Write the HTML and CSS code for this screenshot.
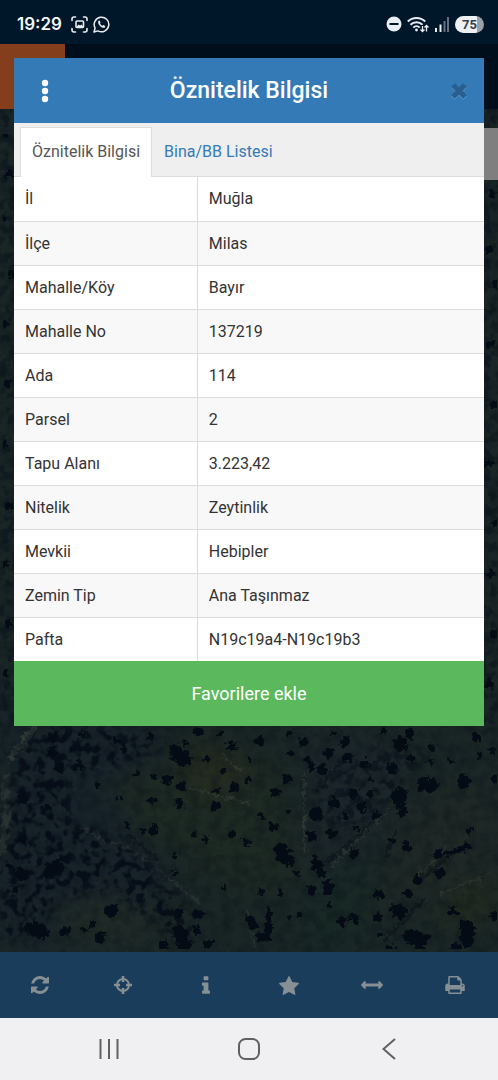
FILE: index.html
```
<!DOCTYPE html>
<html lang="tr">
<head>
  <meta charset="UTF-8" />
  <meta name="viewport" content="width=device-width, initial-scale=1.0"/>
  <title>Öznitelik Bilgisi</title>
  <link rel="stylesheet" href="styles.css">
</head>
<body>

<header class="status-bar">
  <div class="status-left">
    <span class="clock">19:29</span>
    <svg width="17" height="17" viewBox="0 0 17 17" fill="none" stroke="#e8eef4" stroke-width="1.6" stroke-linecap="round">
      <path d="M1 4.500V3a2 2 0 0 1 2-2h1.500M12.500 1H14a2 2 0 0 1 2 2v1.500M16 12.500V14a2 2 0 0 1-2 2h-1.500M4.500 16H3a2 2 0 0 1-2-2v-1.500"/>
      <rect x="5" y="5" width="7.500" height="6.500" rx="1"/>
      <path d="M5.500 11l2-2.500 1.500 1 1.500-1 1.500 2v1h-6z" fill="#e8eef4" stroke="none"/>
    </svg>
    <svg width="17" height="17" viewBox="0 0 17 17" fill="none" stroke="#e8eef4" stroke-width="1.500">
      <path d="M1 16l1.100-4A7.300 7.300 0 1 1 5 14.900z" stroke-linejoin="round"/>
      <path d="M5.200 5.300c.3-.8 1.300-1 1.600-.4l.7 1.500c.1.400-.5.900-.6 1.200.5 1 1.400 1.800 2.400 2.300.4-.1.800-.9 1.200-.8l1.500.8c.5.300.200 1.400-.6 1.800-2.500 1.100-7-3.400-6.200-6.400z" fill="#e8eef4" stroke="none"/>
    </svg>
  </div>
  <div class="status-right">
    <svg width="16" height="16" viewBox="0 0 16 16">
      <circle cx="8" cy="8" r="7.500" fill="#e8eef4"/>
      <path d="M3.500 8h9" stroke="#001629" stroke-width="2"/>
    </svg>
    <svg width="22" height="17" viewBox="0 0 22 17" fill="none" stroke="#e8eef4" stroke-width="2">
      <path d="M.8 5.500a12.500 12.500 0 0 1 17.400 0M3.500 8.700a8.600 8.600 0 0 1 12 0M6.300 11.600a4.600 4.600 0 0 1 6.400 0"/>
      <circle cx="9.500" cy="14" r="1.400" fill="#e8eef4" stroke="none"/>
      <path d="M15.500 9v7M13.500 13.700l2 2.300 2-2.300M19.500 16V9M17.500 11.300l2-2.300 2 2.300" stroke="#001629" stroke-width="3"/>
      <path d="M15.500 10v5.500M13.500 13.500l2 2 2-2M19.500 15.500v-6M17.500 11.500l2-2 2 2" stroke-width="1.300"/>
    </svg>
    <svg width="16" height="16" viewBox="0 0 16 16">
      <path d="M1 12h2v4H1zM5.500 8.500h2V16h-2z" fill="#e8eef4"/>
      <path d="M9.500 5h2v11h-2zM13 1h2v15h-2z" fill="#63717e"/>
    </svg>
    <span class="battery">75</span>
  </div>
</header>

<main class="app">
  <svg class="map" viewBox="0 0 498 908" preserveAspectRatio="xMidYMax slice" aria-hidden="true">
    <defs>
      <filter id="rough" x="0" y="0" width="100%" height="100%" color-interpolation-filters="sRGB">
        <feTurbulence type="fractalNoise" baseFrequency=".22" numOctaves="2" seed="4" result="n"/>
        <feDisplacementMap in="SourceGraphic" in2="n" scale="10" xChannelSelector="R" yChannelSelector="G"/>
        <feGaussianBlur stdDeviation=".7"/>
      </filter>
      <filter id="soft" x="-20%" y="-20%" width="140%" height="140%" color-interpolation-filters="sRGB">
        <feGaussianBlur stdDeviation="14"/>
      </filter>
      <filter id="grain" x="0" y="0" width="100%" height="100%" color-interpolation-filters="sRGB">
        <feTurbulence type="fractalNoise" baseFrequency=".09" numOctaves="4" seed="9"/>
        <feColorMatrix values="0 0 0 0 .02  0 0 0 0 .05  0 0 0 0 .08  0 2.400 0 0 -.95"/>
      </filter>
      <filter id="canopy" x="0" y="0" width="100%" height="100%" color-interpolation-filters="sRGB">
        <feTurbulence type="fractalNoise" baseFrequency=".11" numOctaves="2" seed="21" result="n"/>
        <feColorMatrix in="n" values="0 0 0 0 .02  0 0 0 0 .045  0 0 0 0 .09  0 6 0 0 -2.800" result="dots"/>
        <feGaussianBlur in="SourceAlpha" stdDeviation="6" result="area"/>
        <feComposite in="dots" in2="area" operator="in"/>
      </filter>
    </defs>

    <rect width="498" height="908" fill="#1a2626"/>

    <!-- ground tones -->
    <g filter="url(#soft)">
      <path d="M0 640h130l70 110-60 158H0z" fill="#182329"/>
      <path d="M110 740l90-45 80 20 30 120-60 20-110-60z" fill="#1d2923"/>
      <path d="M180 710l50-5 20 30-50 20z" fill="#262b1f"/>
      <path d="M400 760l98-30v90l-120 60z" fill="#1f2826"/>
      <path d="M450 850l48-20v40l-60 20z" fill="#242c1f"/>
      <path d="M300 690l110 10-30 90-70 60z" fill="#1c262a"/>
      <path d="M320 830l60-10-20 80-60 8z" fill="#182925"/>
      <path d="M60 860l70-10 40 50H60z" fill="#202b27"/>
    </g>

    <!-- tracks -->
    <g fill="none" stroke="#42463f" filter="url(#rough)">
      <path d="M36 682L8 716" stroke-width="6" opacity=".6"/>
      <path d="M6 730v60L0 810" stroke-width="7" opacity=".4"/>
      <path d="M190 744l60 16M304 728v80M222 710l20 18" stroke-width="2" opacity=".5"/>
      <path d="M70 780l70 30 60 50M246 866l10 40M410 840l40-40M330 824l60-60M440 850l50-20" stroke-width="2" opacity=".4"/>
    </g>

    <!-- thick woodland -->
    <g filter="url(#canopy)" opacity=".85">
      <path d="M20 700l30-20 60 5 60 15-40 20-50 10-10 45 55 20 50 50 25 60-40-20-50-40-50 10-25 40H0V780l15-60z"/>
    </g>
    <g filter="url(#canopy)" opacity=".5">
      <path d="M0 0h16v690H0zM482 0h16v690h-16z"/>
      <path d="M380 700l50 10-40 50-60 40-20-60z"/>
    </g>

    <rect width="498" height="908" filter="url(#grain)" opacity=".3"/>

    <!-- trees -->
    <g class="trees" filter="url(#rough)">
      <path stroke-width="14" d="M176 708l8 8M111 867h0M23 830h0M316 770h0M282 811l5 4M281 806h0M400 868h0M410 893l12 2M399 751v6M425 741h6M464 738h0M467 882v14M32 884l10 4M180 888l4 12M400 700h0M50 828l8-6"/>
      <path stroke-width="10" d="M167 736h0M181 743h0M180 759h0M153 786h0M215 762h0M274 783h0M234 743h0M275 748h0M287 735h0M260 698h0M231 702h0M303 698h0M328 709h0M322 726h0M348 714h0M364 720h0M392 724h0M354 750h0M362 763h0M334 759h0M376 771h0M402 768h0M311 792h0M332 790h0M354 810h0M406 803h0M315 818l6 10M312 847h0M328 840v8M380 850h0M342 877h0M354 874h0M378 873h0M395 865h0M408 850h0M417 836h0M440 829h0M438 810h0M453 867h0M497 734h0M60 724h0M80 722h0M52 693h0M52 708h0M23 755h0M22 795h0M65 888h0M100 894h0M164 902h0M208 900h0M196 886h0M198 870h0M180 868h0M250 876l3 4M262 893h0M390 905h0M420 905h0M455 904h0M495 872h0M199 687h0M345 698h0M476 693h0M410 690h0"/>
      <path stroke-width="6" d="M207 716h0M223 727h0M250 716h0M248 736h0M217 747h0M152 756h0M127 781h0M143 786h0M206 795h0M194 790h0M288 767h0M262 772h0M232 790h0M244 796h0M247 800h0M261 848h0M281 848h0M223 844h0M174 829h0M175 812h0M291 709h0M289 689h0M308 714l4 10M370 736h0M370 750h0M345 772h0M356 785h0M391 796h0M469 787h0M430 719h0M411 714h0M451 718h0M480 711h0M431 703h0M297 829h0M300 871h0M290 873h0M330 862h0M444 810l10-2 14-6M10 822h0M15 846h0M92 880h0M84 886h0M185 700h0M150 692h0M115 696h0M124 706h0M82 690h0M98 742h0M136 730h0M154 733h0M120 755h0M48 764h0M220 690h0M334 690h0M384 688h0M492 706h0M269 865v30M380 890h0"/>
      <path stroke-width="4" d="M372 780l-20 18-20 16-16 10M130 792l26 22M318 744l26-30M386 812l10-24M420 836l24-20M384 896l40-40" opacity=".4"/>
      <path stroke-width="8" d="M4 90h0M9 130h0M3 175h0M11 230h0M5 280h0M8 340h0M3 400h0M10 462h0M5 520h0M9 580h0M4 630h0M492 150h0M489 205h0M496 240h0M490 300h0M495 360h0M489 420h0M496 480h0M491 530h0M494 590h0M489 640h0"/>
    </g>
  </svg>

  <div class="app-header"><span class="brand"></span></div>
  <div class="search-edge"></div>

  <section class="dialog" role="dialog" aria-labelledby="dialogTitle">
    <div class="dialog-header">
      <button class="icon-button menu" aria-label="Menü">
        <svg width="8" height="24" viewBox="0 0 8 24" fill="#fff"><circle cx="4" cy="4" r="3.200"/><circle cx="4" cy="12" r="3.200"/><circle cx="4" cy="20" r="3.200"/></svg>
      </button>
      <h1 id="dialogTitle">Öznitelik Bilgisi</h1>
      <button class="icon-button close" aria-label="Kapat">
        <svg width="18" height="18" viewBox="0 0 18 18" fill="none" stroke-width="5"><path d="M3 4l12 12M15 4L3 16" stroke="#5c97c9"/><path d="M3 3l12 12M15 3L3 15" stroke="#295f8f"/></svg>
      </button>
    </div>

    <nav class="tabs">
      <a href="#oznitelik" class="tab active">Öznitelik Bilgisi</a>
      <a href="#bina" class="tab">Bina/BB Listesi</a>
    </nav>

    <table class="attributes" id="oznitelik">
      <tbody>
        <tr><th scope="row">İl</th><td>Muğla</td></tr>
        <tr><th scope="row">İlçe</th><td>Milas</td></tr>
        <tr><th scope="row">Mahalle/Köy</th><td>Bayır</td></tr>
        <tr><th scope="row">Mahalle No</th><td>137219</td></tr>
        <tr><th scope="row">Ada</th><td>114</td></tr>
        <tr><th scope="row">Parsel</th><td>2</td></tr>
        <tr><th scope="row">Tapu Alanı</th><td>3.223,42</td></tr>
        <tr><th scope="row">Nitelik</th><td>Zeytinlik</td></tr>
        <tr><th scope="row">Mevkii</th><td>Hebipler</td></tr>
        <tr><th scope="row">Zemin Tip</th><td>Ana Taşınmaz</td></tr>
        <tr><th scope="row">Pafta</th><td>N19c19a4-N19c19b3</td></tr>
      </tbody>
    </table>

    <button class="favorite">Favorilere ekle</button>
  </section>
</main>

<nav class="toolbar">
  <button aria-label="Yenile">
    <svg width="18" height="18" viewBox="0 0 1536 1536"><path d="M1511 928q0 5-1 7-64 268-268 434.500T764 1536q-146 0-282.500-55T238 1324l-129 129q-19 19-45 19t-45-19-19-45V960q0-26 19-45t45-19h448q26 0 45 19t19 45-19 45l-137 137q71 66 161 102t187 36q134 0 250-65t186-179q11-17 53-117 8-23 30-23h192q13 0 22.500 9.500t9.500 22.500zm25-800v448q0 26-19 45t-45 19h-448q-26 0-45-19t-19-45 19-45l138-138Q969 256 768 256q-134 0-250 65T332 500q-11 17-53 117-8 23-30 23H50q-13 0-22.500-9.500T18 608v-7q65-268 270-434.500T768 0q146 0 284 55.500T1297 212l130-129q19-19 45-19t45 19 19 45z"/></svg>
  </button>
  <button aria-label="Konum">
    <svg width="18" height="18" viewBox="0 0 18 18"><path fill="none" stroke="#868f94" stroke-width="2" d="M9 3a6 6 0 1 0 0 12A6 6 0 0 0 9 3z"/><path d="M7.700 0h2.600v6H7.700zM7.700 12h2.600v6H7.700zM0 7.700h6v2.600H0zM12 7.700h6v2.600h-6z"/></svg>
  </button>
  <button aria-label="Bilgi">
    <svg width="8" height="18" viewBox="0 0 640 1408"><path d="M640 1216v128q0 26-19 45t-45 19H64q-26 0-45-19t-19-45v-128q0-26 19-45t45-19h64V768H64q-26 0-45-19T0 704V576q0-26 19-45t45-19h384q26 0 45 19t19 45v576h64q26 0 45 19t19 45zM512 64v192q0 26-19 45t-45 19H192q-26 0-45-19t-19-45V64q0-26 19-45t45-19h256q26 0 45 19t19 45z"/></svg>
  </button>
  <button aria-label="Favoriler">
    <svg width="20" height="19" viewBox="0 0 1664 1587"><path d="M1664 615q0 22-26 48l-363 354 86 500q1 7 1 20 0 21-10.500 35.500T1321 1587q-19 0-40-12l-449-236-449 236q-22 12-40 12-21 0-31.500-14.500T301 1537q0-6 2-20l86-500L25 663Q0 636 0 615q0-37 56-46l502-73L783 41q19-41 49-41t49 41l225 455 502 73q56 9 56 46z"/></svg>
  </button>
  <button aria-label="Ölç">
    <svg width="22" height="10" viewBox="0 0 1792 768"><path d="M1792 384q0 26-19 45l-256 256q-19 19-45 19t-45-19-19-45V512H384v128q0 26-19 45t-45 19-45-19L19 429Q0 410 0 384t19-45L275 83q19-19 45-19t45 19 19 45v128h1024V128q0-26 19-45t45-19 45 19l256 256q19 19 19 45z"/></svg>
  </button>
  <button aria-label="Yazdır">
    <svg width="20" height="18" viewBox="0 0 1664 1536"><path d="M384 1408h896v-256H384v256zm0-640h896V384h-160q-40 0-68-28t-28-68V128H384v640zm1152 64q0-26-19-45t-45-19-45 19-19 45 19 45 45 19 45-19 19-45zm128 0v416q0 13-9.500 22.500t-22.500 9.500h-224v160q0 40-28 68t-68 28H352q-40 0-68-28t-28-68v-160H32q-13 0-22.500-9.500T0 1248V832q0-79 56.500-135.500T192 640h64V96q0-40 28-68t68-28h672q40 0 88 20t76 48l152 152q28 28 48 76t20 88v256h64q79 0 135.500 56.500T1664 832z"/></svg>
  </button>
</nav>

<nav class="system-nav">
  <button aria-label="Son uygulamalar">
    <svg width="20" height="20" viewBox="0 0 20 20"><path d="M1.500 0v20M10 0v20M18.500 0v20"/></svg>
  </button>
  <button aria-label="Ana ekran">
    <svg width="22" height="22" viewBox="0 0 22 22"><rect x="1" y="1" width="20" height="20" rx="6.500"/></svg>
  </button>
  <button aria-label="Geri">
    <svg width="14" height="22" viewBox="0 0 14 22"><path d="M13 1L1.500 11 13 21"/></svg>
  </button>
</nav>

</body>
</html>
```
FILE: styles.css
```
* { box-sizing: border-box; }
body {
  margin: 0;
  min-height: 100vh;
  display: flex;
  flex-direction: column;
  background: #001629;
  color: #333;
  font-family: Roboto, "Noto Sans", sans-serif;
  font-size: 16px;
}
button {
  border: none;
  padding: 0;
  background: none;
  font-family: inherit;
  cursor: pointer;
}
svg { display: block; }

/* status bar */
.status-bar {
  display: flex;
  justify-content: space-between;
  align-items: center;
  height: 44px;
  padding: 4px 14px 0 17px;
  background: #001629;
}
.status-left,
.status-right {
  display: flex;
  align-items: center;
  gap: 5px;
}
.clock {
  margin-right: 4px;
  color: #f3f7fa;
  font-family: Inter, sans-serif;
  font-size: 17px;
  font-weight: 600;
}
.battery {
  width: 29px;
  border-radius: 9px;
  background: linear-gradient(90deg, #eef1f4 75%, #98a0a8 75%);
  color: #33404c;
  font-size: 13px;
  font-weight: 700;
  line-height: 17px;
  text-align: center;
}

/* map and what lies over it */
.app {
  position: relative;
  flex: 1;
  padding: 14px;
  overflow: hidden;
}
.map {
  position: absolute;
  top: 0;
  left: 0;
  width: 100%;
  height: 100%;
}
.trees {
  fill: none;
  stroke: #040b14;
  stroke-linecap: round;
}
.app-header {
  position: absolute;
  top: 0;
  left: 0;
  right: 0;
  height: 65px;
  background: #000e1b;
}
.brand {
  display: block;
  width: 65px;
  height: 100%;
  background: #843e1c;
}
.search-edge {
  position: absolute;
  top: 84px;
  right: 0;
  width: 40px;
  height: 52px;
  background: #7f7f7f;
}

/* dialog */
.dialog {
  position: relative;
  background: #fff;
}
.dialog-header {
  display: flex;
  align-items: center;
  justify-content: space-between;
  height: 65px;
  padding: 0 16px;
  background: #337ab7;
}
.dialog-header h1 {
  margin: 0;
  color: #fff;
  font-size: 23px;
  font-weight: 500;
}
.icon-button {
  display: flex;
  justify-content: center;
  width: 30px;
}
.icon-button.close { justify-content: flex-end; }
.tabs {
  display: flex;
  height: 54px;
  padding: 4px 6px 0;
  border-bottom: 1px solid #ddd;
  background: #efefef;
}
.tab {
  height: 50px;
  padding: 0 11px;
  border: 1px solid transparent;
  border-bottom: none;
  color: #337ab7;
  line-height: 48px;
  text-decoration: none;
}
.tab.active {
  border-color: #ddd;
  background: #fff;
  color: #555;
}
.attributes {
  width: 100%;
  border-collapse: collapse;
  table-layout: fixed;
}
.attributes th,
.attributes td {
  height: 44px;
  padding: 0 11px;
  border-top: 1px solid #ddd;
  font-weight: 400;
  text-align: left;
}
.attributes tr:first-child th,
.attributes tr:first-child td { border-top: none; }
.attributes th {
  width: 39%;
  border-right: 1px solid #ddd;
}
.attributes tr:nth-child(even) { background: #f9f8f9; }
.favorite {
  display: block;
  width: 100%;
  height: 65px;
  background: #5cb85c;
  color: #fff;
  font-size: 18px;
}

/* bottom bars */
.toolbar {
  display: grid;
  grid-template-columns: repeat(6, 1fr);
  height: 66px;
  background: #1a3d5c;
}
.toolbar button,
.system-nav button {
  display: flex;
  align-items: center;
  justify-content: center;
}
.toolbar button { padding-right: 4px; }
.toolbar svg { fill: #868f94; }
.system-nav {
  display: grid;
  grid-template-columns: repeat(3, 1fr);
  height: 62px;
  padding: 0 39px;
  background: #f0f0f2;
}
.system-nav svg {
  fill: none;
  stroke: #606062;
  stroke-width: 2;
}
```
